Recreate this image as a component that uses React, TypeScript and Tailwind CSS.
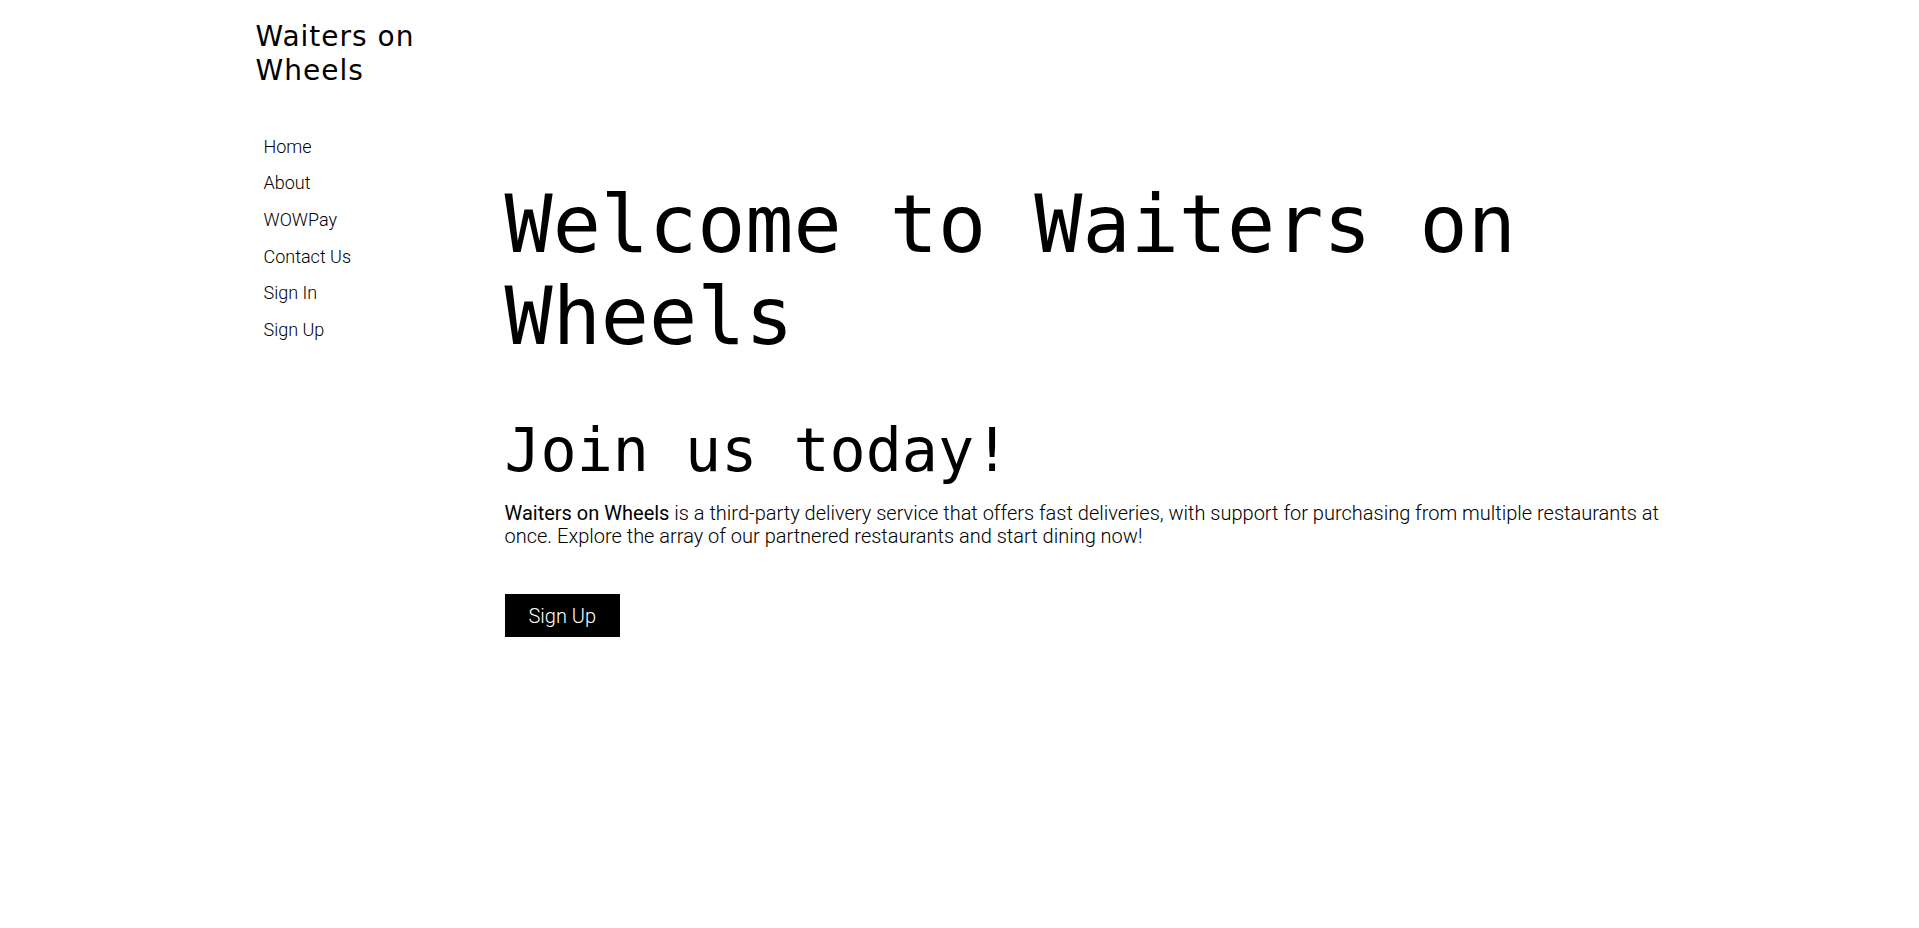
const navLinks = ["Home", "About", "WOWPay", "Contact Us", "Sign In", "Sign Up"];

function Sidebar() {
  return (
    <aside className="w-[249px] shrink-0 pt-[20px]">
      <h1 className="font-['DejaVu_Sans',sans-serif] text-[28px] leading-[34px] tracking-[1px] text-black">
        Waiters on
        <br />
        Wheels
      </h1>
      <nav className="mt-[40.5px] flex flex-col pl-[8px]">
        {navLinks.map((link) => (
          <a
            key={link}
            href="#"
            className="font-['Roboto',sans-serif] text-[18px] font-light leading-[36.7px] text-black"
          >
            {link}
          </a>
        ))}
      </nav>
    </aside>
  );
}

function Hero() {
  return (
    <main className="flex-1 pt-[179px]">
      <h2 className="font-['DejaVu_Sans_Mono',monospace] text-[80px] leading-[92px] text-black">
        Welcome to Waiters on Wheels
      </h2>
      <h3 className="mt-[53px] font-['DejaVu_Sans_Mono',monospace] text-[60px] leading-[69px] text-black">
        Join us today!
      </h3>
      <p className="mt-[17px] font-['Roboto',sans-serif] text-[20px] font-light leading-[23px] text-black">
        <span className="font-normal">Waiters on Wheels</span> is a third-party
        delivery service that offers fast deliveries, with support for
        purchasing from multiple restaurants at once. Explore the array of our
        partnered restaurants and start dining now!
      </p>
      <button className="mt-[46px] flex h-[43px] items-center bg-black px-6 font-['Roboto',sans-serif] text-[20px] font-light text-white">
        Sign Up
      </button>
    </main>
  );
}

export default function App() {
  return (
    <div className="min-h-screen bg-white">
      <div className="mx-auto flex w-[1408px]">
        <Sidebar />
        <Hero />
      </div>
    </div>
  );
}
